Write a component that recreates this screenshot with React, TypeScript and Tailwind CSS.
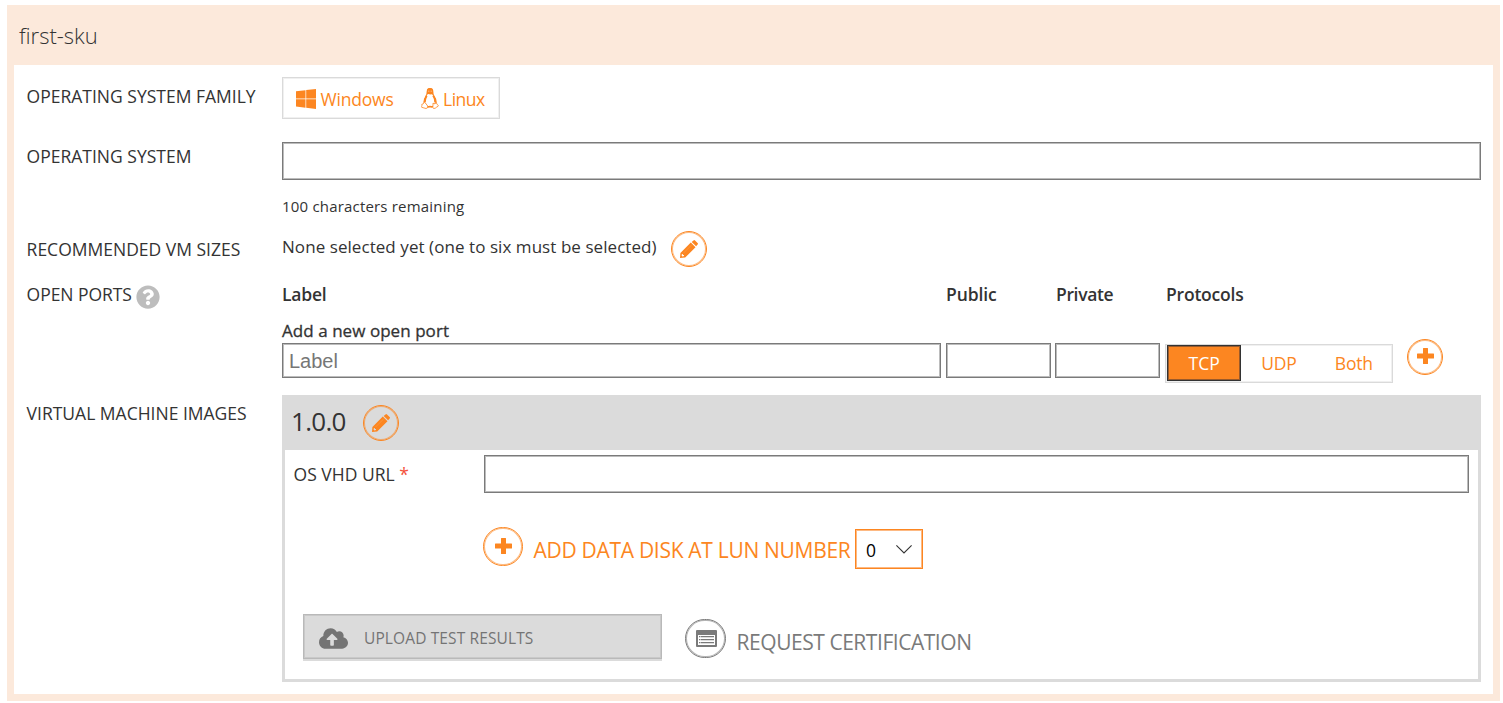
import type { ReactNode } from "react";
import { FaCloudUploadAlt, FaQuestionCircle } from "react-icons/fa";

function PencilIcon() {
  return (
    <svg width="18" height="18" viewBox="0 0 18 18" fill="currentColor">
      <path d="M11.700 1.900 13.500.4Q14.300-.3 15 .4L17.600 3.100Q18.300 3.800 17.600 4.600L16.100 6.300Z" />
      <path
        fillRule="evenodd"
        d="M10.800 2.500 15.500 7.200 6.200 16.600 5.200 17.600 0 18 .4 12.900 1.400 11.900ZM1.900 13.900 1.600 15.600 2.400 16.400 4.100 16.100 3.900 14.900 2.900 14.900 2.800 13.900Z"
      />
      <path d="M3.600 13 12 4.600" stroke="#fff" strokeOpacity=".25" strokeWidth=".5" />
    </svg>
  );
}

function PlusIcon() {
  return (
    <svg className="mb-[2px] ml-px" width="17" height="16" viewBox="0 0 17 16" fill="currentColor">
      <path d="M6.500 0h4q.5 0 .5.5V5.500h5.500q.5 0 .5.5v4q0 .5-.5.5H11v5q0 .5-.5.5h-4q-.5 0-.5-.5v-5H.5q-.5 0-.5-.5V6q0-.5.5-.5H6V.5q0-.5.5-.5z" />
    </svg>
  );
}

function WindowsIcon() {
  return (
    <svg width="20" height="20" viewBox="0 0 20 20" fill="currentColor">
      <path d="M0 2.200 9.500 1.200V9.500H0zM10.200 1.100 20 0V9.500H10.200zM0 10.300H9.500V18.700L0 17.600zM10.200 10.300H20V20L10.200 18.800z" />
    </svg>
  );
}

function TuxIcon() {
  return (
    <svg width="18" height="21" viewBox="0 0 18 21">
      <path
        d="M9 .6C7.200.6 6.300 1.700 6.300 3.300 6.300 5.500 6.200 6.400 5 8.200 3.800 10 2.900 11.800 2.900 14.200L6 18.600H12L15.200 14.200C15.200 11.800 14.200 9.700 12.900 8 11.800 6.500 11.800 5.300 11.800 3.500 11.800 1.700 10.800.6 9 .6z"
        fill="#fff"
        stroke="currentColor"
        strokeWidth="1.100"
      />
      <path d="M9 0C6.900 0 5.900 1.400 5.900 3.200V6.600Q7.500 5.600 9.200 6.500 10.800 5.600 12 7V3.400C12 1.400 11.100 0 9 0z" fill="currentColor" />
      <path d="M7.300 3.200h1M9.700 3.200h1" stroke="#fff" strokeWidth=".6" />
      <path d="M5.700 7.800Q3.800 11 3.900 14M12.100 7.500Q14.500 11 14.200 14.500" fill="none" stroke="currentColor" strokeWidth="1.800" />
      <path d="M6.500 19Q9 18 11.500 19" fill="none" stroke="currentColor" strokeWidth="1.400" />
      <path
        d="M3.500 13.900 6.800 18.100Q7 20.400 5 20.500L.7 19.300Q.4 18.800.9 17.800L.8 16.300 2.300 15.800zM12.100 15 13 15.800Q14.600 15.900 15.300 14.600L16 16.400 17.500 17.600Q17.400 18.300 15.700 19.100 14.300 20.600 12.700 20.500 11.600 20.200 11.900 18.500z"
        fill="#fff"
        stroke="currentColor"
        strokeWidth=".8"
      />
    </svg>
  );
}

function ListIcon() {
  return (
    <svg className="mb-px ml-[2px]" width="21" height="17" viewBox="0 0 21 17" fill="currentColor">
      <path
        fillRule="evenodd"
        d="M1 0H20Q21 0 21 1V16Q21 17 20 17H1Q0 17 0 16V1Q0 0 1 0zM2 5V15H19V5z"
      />
      <path d="M3 6h1.500v1.300H3zM3 9h1.500v1.300H3zM3 12h1.500v1.300H3zM5 6H18v1.300H5zM5 9H18v1.300H5zM5 12H18v1.300H5z" />
    </svg>
  );
}

const inputStyle =
  "block rounded-none border border-[#7a7a7a] bg-white shadow-[inset_0_0_0_1px_#bcbcbc] outline-none";

const orangeRing = "border-[#fc8621] text-[#fc8621] shadow-[inset_0_0_0_1px_#fc862190]";

function FieldLabel({ children, className }: { children: ReactNode; className: string }) {
  return (
    <div className={`w-[255px] shrink-0 pl-[0.6px] text-[17.5px] leading-6 whitespace-nowrap ${className}`}>
      {children}
    </div>
  );
}

function RoundButton({ label, className, children }: { label: string; className: string; children: ReactNode }) {
  return (
    <button
      aria-label={label}
      className={`flex shrink-0 items-center justify-center rounded-full border ${orangeRing} ${className}`}
    >
      {children}
    </button>
  );
}

export default function App() {
  return (
    <div className="h-[703px] w-[1503px] overflow-hidden bg-white pt-[5px] pl-[7px] font-['Open_Sans',sans-serif] text-[#333]">
      <section className="flex h-[696px] w-[1493px] flex-col bg-[#fce9db] px-[7px] pb-[7px]">
        <h1 className="h-[60px] pt-[15px] pl-[5px] text-[22px] leading-[30px] font-light">first-sku</h1>
        <div className="flex-1 bg-white pl-[12px]">
          <div className="flex h-[77px] pt-[12px]">
            <FieldLabel className="pt-[7px]">OPERATING SYSTEM FAMILY</FieldLabel>
            <div className="ml-px flex h-[42px] w-[218px] border border-[#dadada] pl-[13px] text-[17.5px] leading-6 text-[#fc8621] shadow-[inset_0_0_0_1px_#f0f0f0]">
              <button className="flex w-[125px] items-start pt-[11px]">
                <WindowsIcon />
                <span className="-mt-[2px] ml-[4.5px] tracking-[-0.2px]">Windows</span>
              </button>
              <button className="flex items-start pt-[10px]">
                <TuxIcon />
                <span className="-mt-px ml-[4px] tracking-[-0.5px]">Linux</span>
              </button>
            </div>
          </div>

          <div className="flex h-[89px]">
            <FieldLabel className="pt-[2px]">OPERATING SYSTEM</FieldLabel>
            <div className="ml-px">
              <input aria-label="Operating system" className={`h-[38px] w-[1199px] ${inputStyle}`} />
              <p className="pt-[15px] text-[15px] leading-[22px] tracking-[0.19px]">100 characters remaining</p>
            </div>
          </div>

          <div className="flex h-[52px]">
            <FieldLabel className="pt-[6px]">RECOMMENDED VM SIZES</FieldLabel>
            <p className="ml-px w-[389px] pt-[4px] text-[17px] leading-6 tracking-[0.06px]">
              None selected yet (one to six must be selected)
            </p>
            <RoundButton label="Edit sizes" className="size-[36px]">
              <PencilIcon />
            </RoundButton>
          </div>

          <div className="flex h-[112px]">
            <FieldLabel className="flex">
              <span className="-mt-px tracking-[-0.05px]">OPEN PORTS</span>
              <FaQuestionCircle className="mt-[2px] ml-[4.400px] text-[#bdbdbd]" size={24} />
            </FieldLabel>
            <div className="ml-px">
              <div className="-mt-px flex h-[37px] text-[17.5px] leading-6 font-semibold tracking-[-0.2px]">
                <span className="w-[664px]">Label</span>
                <span className="w-[110px] tracking-[-0.1px]">Public</span>
                <span className="w-[110px] tracking-[-0.35px]">Private</span>
                <span>Protocols</span>
              </div>
              <div className="h-[24px] text-[17px] leading-6 tracking-[0.05px] [-webkit-text-stroke:0.3px_#333]">
                Add a new open port
              </div>
              <div className="flex">
                <input
                  aria-label="Label"
                  placeholder="Label"
                  className={`h-[35px] w-[659px] px-[6px] pt-[2px] font-['Liberation_Sans',sans-serif] text-[20px] placeholder:text-[#767676] ${inputStyle}`}
                />
                <input aria-label="Public" className={`ml-[5px] h-[35px] w-[105px] ${inputStyle}`} />
                <input aria-label="Private" className={`ml-[4px] h-[35px] w-[105px] ${inputStyle}`} />
                <div className="mt-px ml-[5px] flex h-[39px] w-[228px] border border-[#dadada] px-px text-[17.5px] text-[#fc8621] shadow-[inset_0_0_0_1px_#f0f0f0]">
                  <button className="h-[36px] w-[75px] border border-[#333] bg-[#fc8621] text-white shadow-[inset_0_0_0_1px_#9a5a2a]">
                    TCP
                  </button>
                  <button className="h-[36px] w-[76px] tracking-[-0.2px]">UDP</button>
                  <button className="h-[36px] w-[75px] tracking-[-0.2px]">Both</button>
                </div>
                <RoundButton label="Add port" className="-mt-[4px] ml-[14px] size-[36px]">
                  <PlusIcon />
                </RoundButton>
              </div>
            </div>
          </div>

          <div className="flex">
            <FieldLabel className="pt-[6px]">VIRTUAL MACHINE IMAGES</FieldLabel>
            <div className="ml-px h-[287px] w-[1199px] border-[3px] border-t-0 border-[#dbdbdb]">
              <div className="flex h-[55px] bg-[#dbdbdb] pt-[10px] pl-[6px]">
                <h2 className="w-[72px] text-[26px] leading-8 tracking-[-0.7px]">1.0.0</h2>
                <RoundButton label="Edit version" className="size-[36px]">
                  <PencilIcon />
                </RoundButton>
              </div>
              <div className="flex h-[77px] pt-[5px] pl-[8px]">
                <div className="w-[191px] pt-[7px] pl-[0.6px] text-[17.5px] leading-6">
                  OS VHD URL <span className="text-[#f4523b]">*</span>
                </div>
                <input aria-label="OS VHD URL" className={`h-[38px] w-[985px] ${inputStyle}`} />
              </div>
              <div className="flex h-[87px] pl-[198px] text-[#fc8621]">
                <RoundButton label="Add data disk" className="h-[39px] w-[40px]">
                  <PlusIcon />
                </RoundButton>
                <span className="ml-[10px] w-[322px] pt-[8px] pl-[0.6px] text-[21px] leading-[30px] tracking-[-0.3px] whitespace-nowrap">
                  ADD DATA DISK AT LUN NUMBER
                </span>
                <button className="mt-[2px] flex h-[40px] w-[68px] items-center border border-[#fc8621] pl-[10px] text-[17.5px] text-black shadow-[inset_0_0_0_1px_#fdb983]">
                  <span className="pt-[3px]">0</span>
                  <svg className="ml-[20px]" width="16" height="9" viewBox="0 0 16 9" fill="none" stroke="#333" strokeWidth="1.1">
                    <path d="M.4.4 8 8 15.600.4" />
                  </svg>
                </button>
              </div>
              <div className="flex pl-[18px] text-[#7a7a7a]">
                <button className="flex h-[45px] w-[359px] items-center border border-[#b9b9b9] bg-[#dbdbdb] pt-[3px] pl-[15px] text-[15.5px] text-[#747474] shadow-[0_2px_0_#dbdbdb,inset_0_0_0_1px_#c9c9c9]">
                  <FaCloudUploadAlt size={29} className="w-[29px] text-[#747474]" />
                  <span className="ml-[16px] pt-[2px] tracking-[0.12px]">UPLOAD TEST RESULTS</span>
                </button>
                <button className="mt-[5px] ml-[23px] flex">
                  <span className="flex h-[39px] w-[41px] items-center justify-center rounded-full border border-[#7a7a7a] shadow-[inset_0_0_0_1px_#7a7a7a90]">
                    <ListIcon />
                  </span>
                  <span className="ml-[10px] pt-[8px] pl-[0.6px] text-[21px] leading-[30px] tracking-[-0.46px]">
                    REQUEST CERTIFICATION
                  </span>
                </button>
              </div>
            </div>
          </div>
        </div>
      </section>
    </div>
  );
}
